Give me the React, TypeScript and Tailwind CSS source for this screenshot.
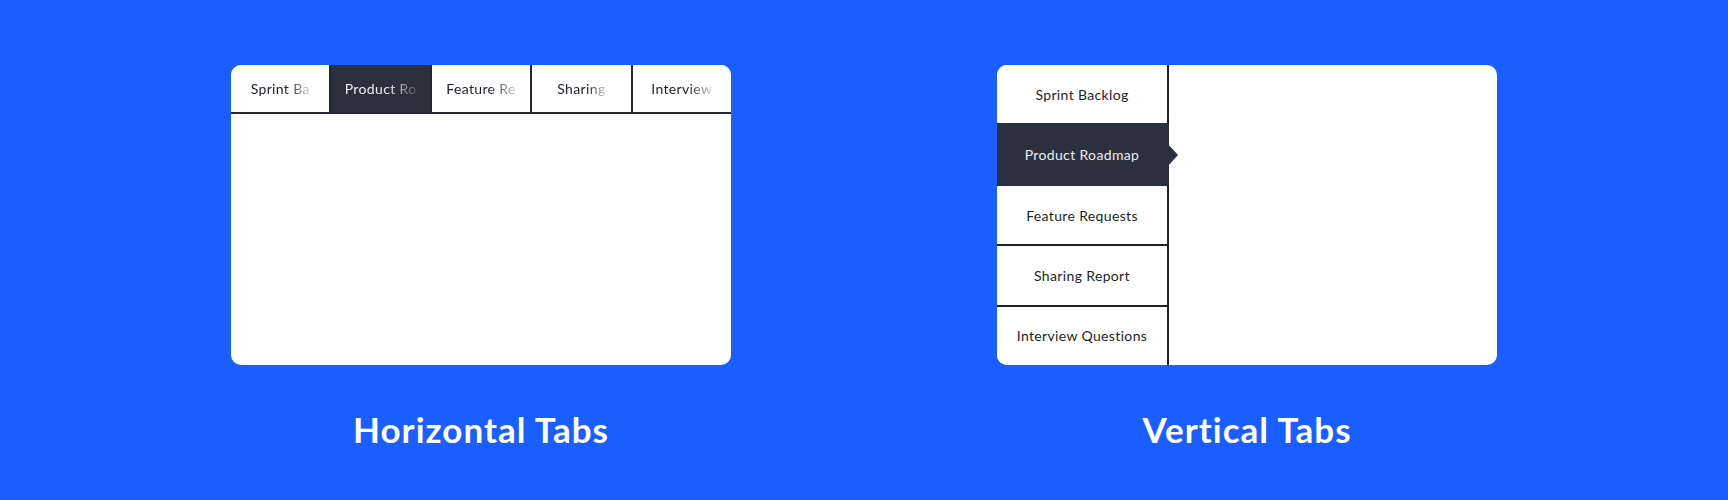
import { useState } from "react"

const tabs = [
  { label: "Sprint Backlog", short: "Sprint Ba" },
  { label: "Product Roadmap", short: "Product Ro" },
  { label: "Feature Requests", short: "Feature Re" },
  { label: "Sharing Report", short: "Sharing" },
  { label: "Interview Questions", short: "Interview" },
]

function HorizontalTabs() {
  const [active, setActive] = useState(1)

  return (
    <div className="w-[500px] h-[300px] bg-white rounded-[10px] overflow-hidden flex flex-col">
      <div className="flex h-[49px] border-b-2 border-[#232733]">
        {tabs.map((tab, i) => (
          <button
            key={tab.label}
            onClick={() => setActive(i)}
            title={tab.label}
            className={`flex-1 flex items-center justify-center text-[14px] tracking-[0.35px] ${
              i < tabs.length - 1 ? "border-r-2 border-[#232733]" : ""
            } ${i === active ? "bg-[#2b303e] text-[#eceef2]" : "bg-white text-[#1c1f28]"}`}
          >
            {/* cut-off labels fade out on the right */}
            <span className="whitespace-nowrap [mask-image:linear-gradient(to_right,#000_62%,rgba(0,0,0,0.2)_100%)]">
              {tab.short}
            </span>
          </button>
        ))}
      </div>
      <div className="flex-1" />
    </div>
  )
}

function VerticalTabs() {
  const [active, setActive] = useState(1)

  return (
    <div className="w-[500px] h-[300px] bg-white rounded-[10px] overflow-hidden flex">
      <div className="w-[172px] flex flex-col">
        {tabs.map((tab, i) => (
          <button
            key={tab.label}
            onClick={() => setActive(i)}
            className={`relative flex-1 flex items-center justify-center text-[14px] tracking-[0.35px] border-r-2 ${
              i < tabs.length - 1 ? "border-b-2" : ""
            } ${
              i === active
                ? "bg-[#2b303e] text-[#eceef2] border-[#2b303e]"
                : "bg-white text-[#1c1f28] border-[#1d2029]"
            } ${i === active - 1 ? "border-b-[#2b303e]" : ""}`}
          >
            {tab.label}
            {i === active && (
              <span className="absolute left-full top-1/2 -translate-y-1/2 w-0 h-0 border-y-[12px] border-y-transparent border-l-[11px] border-l-[#2b303e]" />
            )}
          </button>
        ))}
      </div>
      <div className="flex-1" />
    </div>
  )
}

export default function App() {
  return (
    <div className="min-h-[500px] bg-[#1b5eff] font-['Lato',sans-serif] pt-[65px]">
      <div className="flex justify-center gap-[266px]">
        <div className="flex flex-col items-center">
          <HorizontalTabs />
          <h2 className="mt-[47px] text-[35px] leading-none font-bold tracking-[1px] text-white">Horizontal Tabs</h2>
        </div>
        <div className="flex flex-col items-center">
          <VerticalTabs />
          <h2 className="mt-[47px] text-[35px] leading-none font-bold tracking-[1px] text-white">Vertical Tabs</h2>
        </div>
      </div>
    </div>
  )
}
